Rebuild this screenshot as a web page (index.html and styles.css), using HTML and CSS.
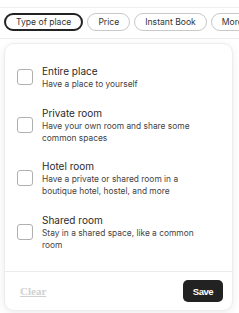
FILE: index.html
```html
<!DOCTYPE html>
<html lang="en">
<head>
<meta charset="utf-8">
<title>Type of place</title>
<link rel="stylesheet" href="styles.css">
</head>
<body>
  <div class="topbar"></div>
  <nav class="filters">
    <button class="pill pill-active">Type of place</button>
    <button class="pill">Price</button>
    <button class="pill">Instant Book</button>
    <button class="pill">More filters</button>
  </nav>
  <div class="popover">
    <ul class="options">
      <li class="option">
        <span class="checkbox"></span>
        <div class="option-text">
          <div class="option-title">Entire place</div>
          <div class="option-desc">Have a place to yourself</div>
        </div>
      </li>
      <li class="option">
        <span class="checkbox"></span>
        <div class="option-text">
          <div class="option-title">Private room</div>
          <div class="option-desc">Have your own room and share some common spaces</div>
        </div>
      </li>
      <li class="option">
        <span class="checkbox"></span>
        <div class="option-text">
          <div class="option-title">Hotel room</div>
          <div class="option-desc">Have a private or shared room in a boutique hotel, hostel, and more</div>
        </div>
      </li>
      <li class="option">
        <span class="checkbox"></span>
        <div class="option-text">
          <div class="option-title">Shared room</div>
          <div class="option-desc">Stay in a shared space, like a common room</div>
        </div>
      </li>
    </ul>
    <div class="footer">
      <button class="clear" disabled>Clear</button>
      <button class="save">Save</button>
    </div>
  </div>
</body>
</html>
```
FILE: styles.css
```css
* { box-sizing: border-box; }

html, body {
  margin: 0;
  padding: 0;
  background: #ffffff;
}

body {
  width: 239px;
  height: 313px;
  overflow: hidden;
  position: relative;
  font-family: Inter, "Noto Sans", sans-serif;
  color: #222222;
}

.topbar {
  height: 8px;
  border-bottom: 1px solid #f0f0f0;
}

.filters {
  display: flex;
  gap: 4px;
  padding: 5px 0 7px 4px;
  border-bottom: 1px solid #ececec;
  white-space: nowrap;
  overflow: hidden;
}

.pill {
  flex: none;
  height: 18px;
  padding: 0 10px;
  border: 1px solid #c8c8c8;
  border-radius: 9px;
  background: #fff;
  font-family: Inter, "Noto Sans", sans-serif;
  font-size: 8.6px;
  color: #333;
  line-height: 16px;
}

.pill-active {
  border: 2px solid #222;
  padding: 0 10px;
  line-height: 14px;
}

.popover {
  position: absolute;
  top: 43px;
  left: 4px;
  width: 229px;
  height: 268px;
  background: #fff;
  border: 1px solid #ededed;
  border-radius: 10px;
  box-shadow: 0 2px 8px rgba(0, 0, 0, 0.08);
  display: flex;
  flex-direction: column;
}

.options {
  list-style: none;
  margin: 0;
  padding: 20px 19px 20px 12px;
  display: flex;
  flex-direction: column;
  gap: 15.5px;
  border-bottom: 1px solid #ebebeb;
}

.option {
  display: flex;
  align-items: center;
  gap: 9px;
}

.checkbox {
  flex: none;
  width: 16px;
  height: 16px;
  border: 1px solid #b0b0b0;
  border-radius: 3px;
  background: #fff;
}

.option-title {
  font-size: 10px;
  line-height: 14px;
  color: #2a2a2a;
}

.option-desc {
  font-size: 8.4px;
  line-height: 12px;
  color: #444;
}

.footer {
  flex: 1;
  display: flex;
  align-items: center;
  justify-content: space-between;
  padding: 1px 9px 0 15px;
}

.clear {
  border: none;
  background: none;
  padding: 0;
  font-family: "Liberation Serif", serif;
  font-weight: bold;
  font-size: 11px;
  color: #d0d0d0;
  text-decoration: underline;
}

.save {
  width: 40px;
  height: 22px;
  border: none;
  border-radius: 5px;
  background: #222222;
  color: #fff;
  font-family: "Liberation Sans", Arial, sans-serif;
  font-weight: bold;
  font-size: 9.6px;
  letter-spacing: -0.5px;
  padding: 0;
}
```
